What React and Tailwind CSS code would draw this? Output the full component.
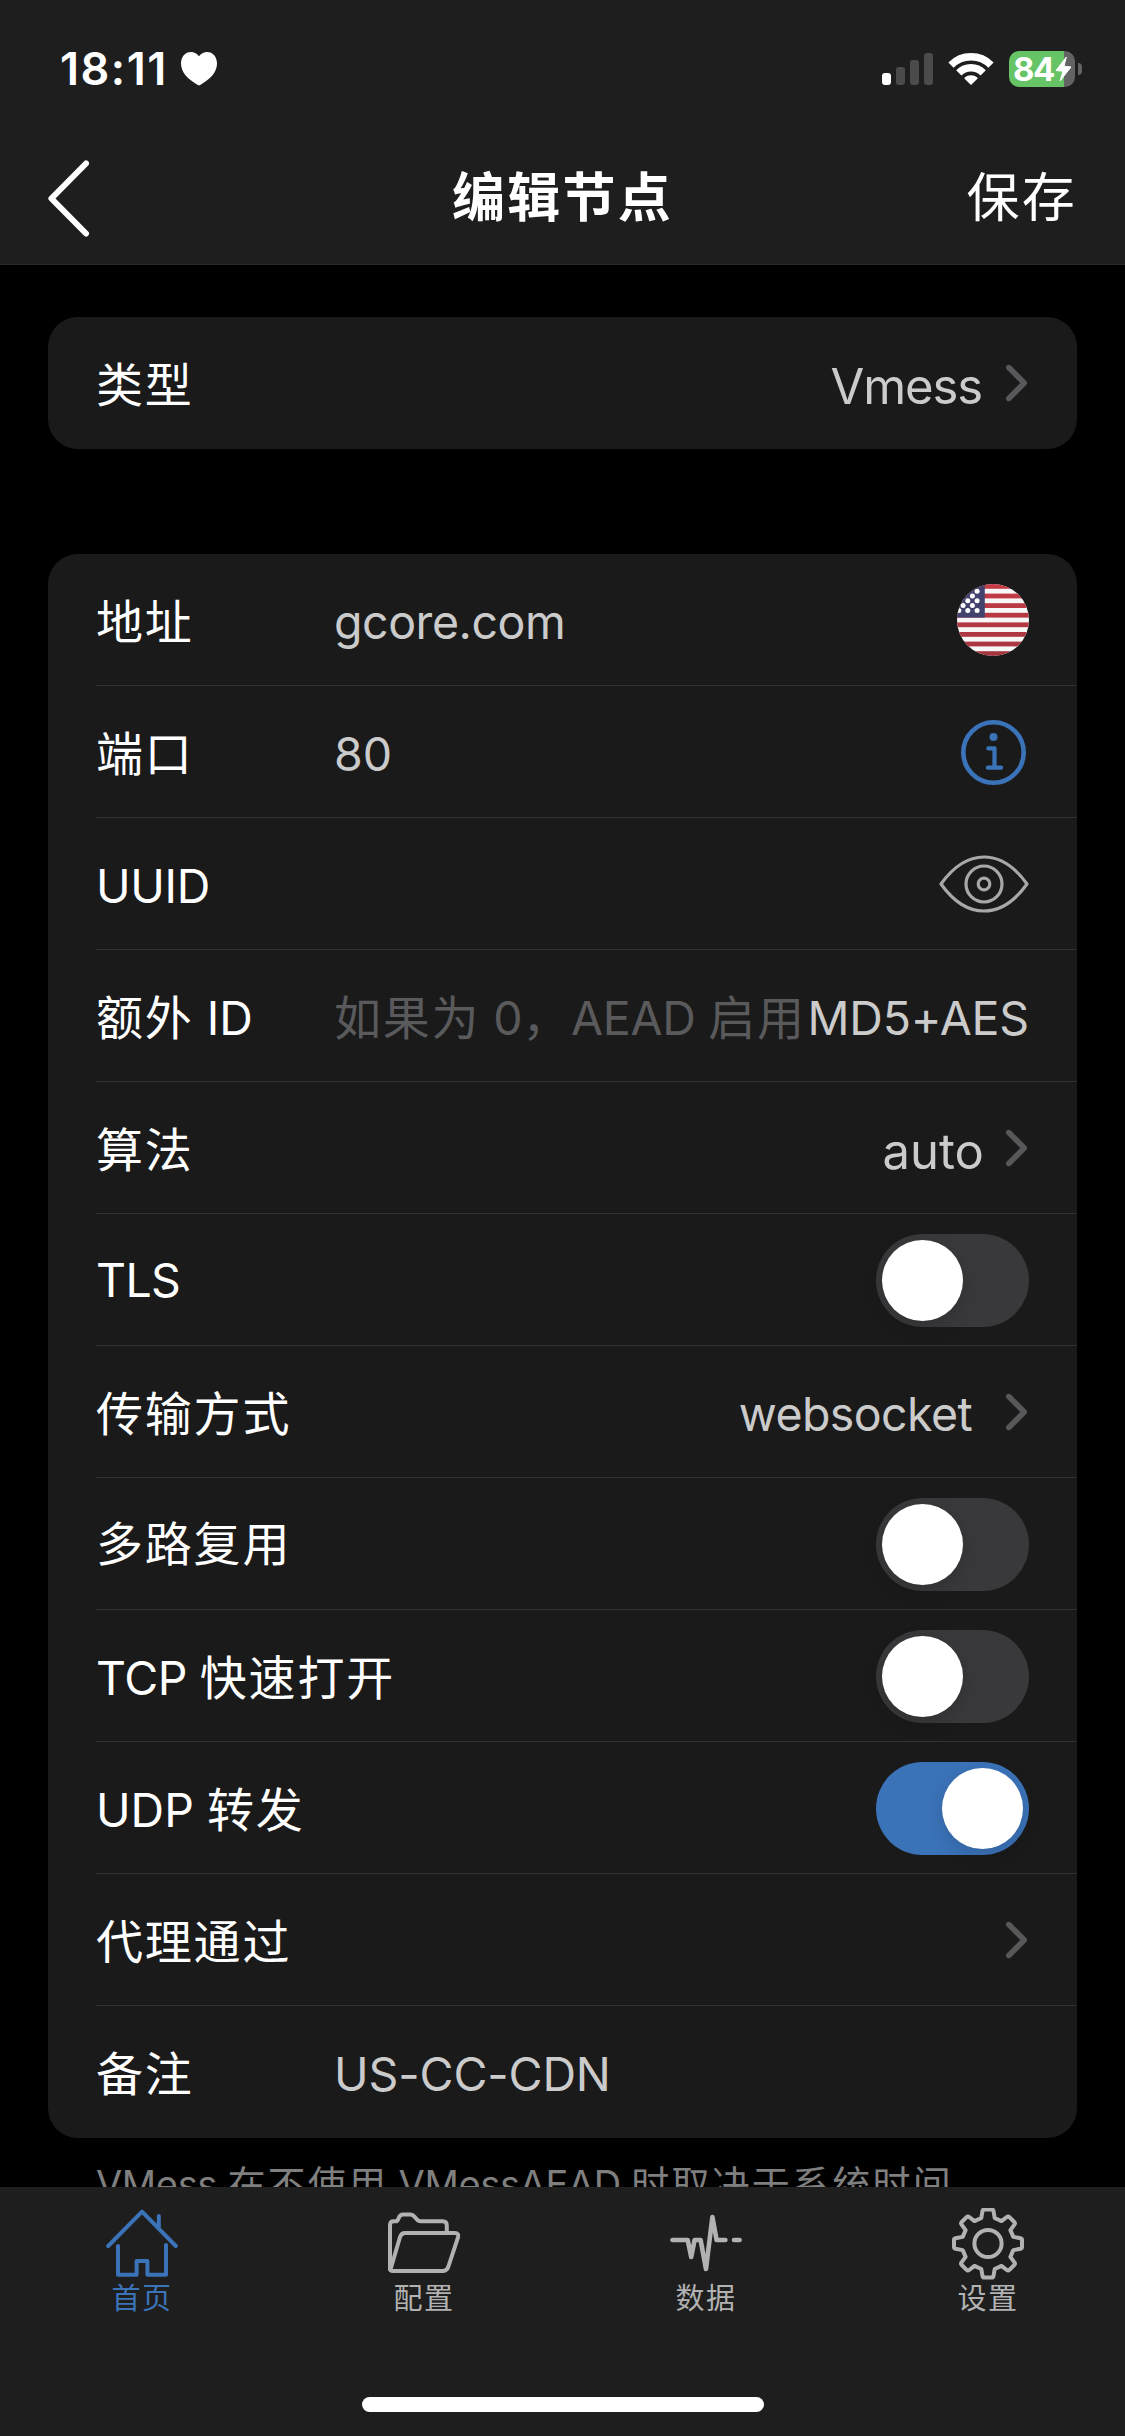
// Splits mixed text so Chinese runs get their own size and tracking.
function Mixed({ text, cjk, latin = "" }) {
  return text
    .split(/([\u3000-\u9fff\uff00-\uffef]+)/)
    .filter(Boolean)
    .map((run, i) => (
      <span key={i} className={/[\u3000-\u9fff\uff00-\uffef]/.test(run) ? cjk : latin}>
        {run}
      </span>
    ));
}

const ROW_CJK = "text-[47px] tracking-[1.8px]";

function StatusBar() {
  return (
    <div className="flex h-[137px] items-center pl-[60px] pr-[43px]">
      <span className="text-[45px] font-semibold leading-none tracking-[1.5px]">18:11</span>
      <svg className="ml-[13px] mt-px h-[34px] w-9" viewBox="0 0 36 34" fill="#fff">
        <path d="M18 4.2C20.3 1 23.4 0 26 0C32 0 36 4.8 36 11.6C36 20.5 29 27.3 19.6 32.8Q18 33.8 16.4 32.8C7 27.3 0 20.5 0 11.6C0 4.8 4 0 10 0C12.6 0 15.7 1 18 4.2Z" />
      </svg>
      <div className="ml-auto flex h-8 items-end gap-[5px]">
        <i className="h-3 w-[9px] rounded-[3px] bg-white" />
        <i className="h-[18px] w-[9px] rounded-[3px] bg-[#4b4b4b]" />
        <i className="h-[25px] w-[9px] rounded-[3px] bg-[#4b4b4b]" />
        <i className="h-8 w-[9px] rounded-[3px] bg-[#4b4b4b]" />
      </div>
      <svg className="ml-[15px] h-[35px] w-[46px]" viewBox="0 0 46 35" fill="none" stroke="#fff" strokeWidth="7.4">
        <path d="M3 14.1A28.2 28.2 0 0 1 43 14.1" />
        <path d="M10.8 21.8A17.2 17.2 0 0 1 35.2 21.8" />
        <path d="M23 33L17.2 27.2A8.6 8.6 0 0 1 28.8 27.2Z" fill="#fff" strokeWidth="1.6" strokeLinejoin="round" />
      </svg>
      <div className="relative ml-[15px] flex h-9 w-[66px] items-center rounded-[10px] bg-gradient-to-r from-[#66c466] from-[55px] to-[#636363] to-[55px]">
        <span className="pl-1 text-[33px] font-bold leading-9 tracking-[-1.5px]">84</span>
        <svg className="absolute inset-0" width="66" height="36" viewBox="0 0 66 36" fill="#fff" stroke="#fff" strokeLinejoin="round">
          <path d="M57.3 6L47 19.5L53.9 20.2L51.2 29.8L62 16L55 15.2Z" />
        </svg>
      </div>
      <i className="ml-[3px] h-3 w-1 rounded-r-full bg-[#636363]" />
    </div>
  );
}

function NavBar() {
  return (
    <div className="-mt-[5px] grid h-[132px] grid-cols-3 items-center px-12">
      <svg className="h-[77px] w-[42px]" viewBox="0 0 42 77" fill="none" stroke="#fff" strokeWidth="6" strokeLinecap="round" strokeLinejoin="round">
        <path d="M38 3.5L3.4 38.5L38 73.5" />
      </svg>
      <h1 className="whitespace-nowrap text-center text-[53px] font-semibold leading-none tracking-[2.2px]">编辑节点</h1>
      <span className="text-right text-[53px] leading-none tracking-[2.2px]">保存</span>
    </div>
  );
}

function Chevron() {
  return (
    <svg className="h-[38px] w-6 shrink-0" viewBox="0 0 24 38" fill="none" stroke="#58585a" strokeWidth="5.6" strokeLinecap="round" strokeLinejoin="round">
      <path d="M3.8 3.6L19.2 19L3.8 34.4" />
    </svg>
  );
}

const STRIPES = [0, 2, 4, 6, 8, 10, 12, 14];
const STARS = [
  [20.1, 7.3], [15.4, 11.9], [10.8, 16.7], [20.1, 16.7], [6.1, 21.5],
  [15.4, 21.5], [1.8, 26.4], [10.8, 26.4], [20.1, 26.4],
];

function Flag() {
  return (
    <svg className="h-[72px] w-[72px]" viewBox="0 0 72 72">
      <defs>
        <linearGradient id="red" x2="0" y2="72" gradientUnits="userSpaceOnUse">
          <stop stopColor="#c63b46" />
          <stop offset="1" stopColor="#a43640" />
        </linearGradient>
        <clipPath id="round"><circle cx="36" cy="36" r="36" /></clipPath>
      </defs>
      <g clipPath="url(#round)">
        <rect width="72" height="72" fill="#f8f7f8" />
        {STRIPES.map((n) => (
          <rect key={n} y={n * 4.8} width="72" height="4.8" fill="url(#red)" />
        ))}
        <rect width="27.8" height="33.6" fill="#43426f" />
        {STARS.map(([x, y]) => (
          <circle key={x + "-" + y} cx={x} cy={y} r="2.5" fill="#fff" />
        ))}
      </g>
    </svg>
  );
}

function Info() {
  return (
    <svg className="mr-0.5 h-[66px] w-[66px]" viewBox="0 0 66 66" fill="none" stroke="#3b73b9" strokeWidth="4.6">
      <circle cx="32.5" cy="33.5" r="30.2" />
      <circle cx="32.5" cy="18" r="4" fill="#3b73b9" stroke="none" />
      <path d="M27.3 29.3H33.5V48.7M26.9 48.7H40.1" strokeWidth="4.2" strokeLinecap="round" strokeLinejoin="round" />
    </svg>
  );
}

function Eye() {
  return (
    <svg className="mt-px h-[58px] w-[90px]" viewBox="0 0 90 58" fill="none" stroke="#a8a8a8" strokeWidth="3.2" strokeLinejoin="round">
      <path d="M2 29C12 15 27 2 45 2S78 15 88 29C78 43 63 56 45 56S12 43 2 29Z" />
      <circle cx="45" cy="29" r="18" />
      <circle cx="45" cy="29" r="5.8" />
    </svg>
  );
}

function Switch({ on }) {
  return (
    <div className={`mt-0.5 flex h-[93px] w-[153px] items-center rounded-full px-1.5 ${on ? "justify-end bg-[#3b73b9]" : "bg-[#39393b]"}`}>
      <div className="h-[81px] w-[81px] rounded-full bg-white shadow-[0_6px_18px_rgba(0,0,0,0.15)]" />
    </div>
  );
}

function Row({ label, tight, labelTrack, last, children }) {
  return (
    <div className={`ml-12 flex h-[132px] items-center whitespace-nowrap pr-12 ${last ? "" : "border-b border-[#323233]"}`}>
      <span className={`w-[238px] shrink-0 text-[46.5px] leading-[56px] ${tight ? "" : "pt-1"}`}>
        <Mixed text={label} cjk={ROW_CJK} latin={labelTrack} />
      </span>
      {children}
    </div>
  );
}

function Value({ children, color = "text-[#cbcbcb]", className = "" }) {
  return <span className={`pt-1 text-[46.5px] leading-[56px] ${color} ${className}`}>{children}</span>;
}

function Right({ children }) {
  return <div className="ml-auto flex items-center">{children}</div>;
}

const TAB_ICONS = {
  home: (
    <g transform="translate(0 1)">
      <path d="M2.2 37L36 2.6L69.8 37M52.8 7V19" />
      <path d="M12 37V65.7H30.6V52H41.4V65.7H60V36" />
    </g>
  ),
  folder: (
    <g transform="translate(0 2.5)">
      <path d="M2 59V14.5Q2 10.8 5.6 10.8H7.5Q9.6 10.8 10.7 7.5Q12 4 15 4H22Q25 4 27.2 7L29.6 9.7Q30.6 10.8 32.6 10.8H54.6Q58.8 10.8 58.8 15V22" />
      <path d="M2.5 59L12 26.5Q13.4 22.6 17 22.6H67Q71 22.6 70 26.8L60.4 56Q58.8 60.5 54.5 60.5H5Q2 60.5 2 57.5" />
    </g>
  ),
  pulse: <path d="M2.5 32H17.7L21.2 49L24.6 32H30.6L36 61L42.4 9L46.6 32H55.4M64 32H69.6" strokeWidth="4.6" />,
  gear: (
    <g transform="translate(0 -0.5)">
      <path d="M32.3 2H39.7Q41.2 2 41.5 3.5L42.7 10.5L49.5 13.6L54.8 9.5Q56.2 8.4 57.4 9.6L62.3 14.5Q63.5 15.8 62.4 17.1L58.4 22.6L61.3 29.4L68.5 30.7Q70 31 70 32.4V39.6Q70 41 68.5 41.3L61.3 42.6L58.4 49.4L62.4 54.9Q63.5 56.2 62.3 57.5L57.4 62.4Q56.2 63.6 54.8 62.5L49.5 58.4L42.7 61.5L41.5 68.5Q41.2 70 39.7 70H32.3Q30.8 70 30.5 68.5L29.3 61.5L22.5 58.4L17.2 62.5Q15.8 63.6 14.6 62.4L9.7 57.5Q8.5 56.2 9.6 54.9L13.6 49.4L10.7 42.6L3.5 41.3Q2 41 2 39.6V32.4Q2 31 3.5 30.7L10.7 29.4L13.6 22.6L9.6 17.1Q8.5 15.8 9.7 14.5L14.6 9.6Q15.8 8.4 17.2 9.5L22.5 13.6L29.3 10.5L30.5 3.5Q30.8 2 32.3 2Z" />
      <circle cx="36" cy="36" r="13.6" />
    </g>
  ),
};

function Tab({ icon, label, active }) {
  return (
    <div className={`flex flex-col items-center ${active ? "text-[#3b73b9]" : "text-[#b2b2b2]"}`}>
      <svg
        className="h-[72px] w-[72px]"
        viewBox="0 0 72 72"
        fill="none"
        stroke="currentColor"
        strokeWidth="4"
        strokeLinecap="round"
        strokeLinejoin="round"
      >
        {TAB_ICONS[icon]}
      </svg>
      <span className="mt-[3px] text-[29px] leading-8 tracking-[1.5px]">{label}</span>
    </div>
  );
}

export default function App() {
  return (
    <div className="flex h-[2436px] w-[1125px] flex-col overflow-hidden bg-black font-['Inter','Noto_Sans_CJK_SC',sans-serif] text-white">
      <header className="h-[265px] shrink-0 border-b border-[#2a2a2a] bg-[#1e1e1e]">
        <StatusBar />
        <NavBar />
      </header>

      <main className="min-h-0 flex-1 overflow-hidden px-12 pt-[52px]">
        <section className="rounded-[30px] bg-[#1a1a1a]">
          <Row label="类型" last>
            <Right>
              <span className="mr-[23px] pt-2 text-[49px] leading-[56px] tracking-[-1.1px] text-[#cbcbcb]">Vmess</span>
              <Chevron />
            </Right>
          </Row>
        </section>

        <section className="mt-[105px] rounded-[30px] bg-[#1a1a1a]">
          <Row label="地址">
            <Value className="tracking-[-0.45px]">gcore.com</Value>
            <Right><Flag /></Right>
          </Row>
          <Row label="端口">
            <Value>80</Value>
            <Right><Info /></Right>
          </Row>
          <Row label="UUID" labelTrack="tracking-[-0.3px]">
            <Right><Eye /></Right>
          </Row>
          <Row label="额外 ID">
            <Value color="text-[#5a5a5c]">
              <Mixed text="如果为 0，AEAD 启用" cjk={ROW_CJK} latin="tracking-[-0.3px]" />
            </Value>
            <Right><Value className="tracking-[-0.2px]">MD5+AES</Value></Right>
          </Row>
          <Row label="算法">
            <Right>
              <span className="mr-[21px] pt-2 text-[49px] leading-[56px] text-[#cbcbcb]">auto</span>
              <Chevron />
            </Right>
          </Row>
          <Row label="TLS" labelTrack="tracking-[-0.6px]" tight>
            <Right><Switch /></Right>
          </Row>
          <Row label="传输方式">
            <Right>
              <Value className="mr-[33px] tracking-[-0.6px]">websocket</Value>
              <Chevron />
            </Right>
          </Row>
          <Row label="多路复用" tight>
            <Right><Switch /></Right>
          </Row>
          <Row label="TCP 快速打开" labelTrack="tracking-[-0.4px]">
            <Right><Switch /></Right>
          </Row>
          <Row label="UDP 转发">
            <Right><Switch on /></Right>
          </Row>
          <Row label="代理通过">
            <Right><Chevron /></Right>
          </Row>
          <Row label="备注" last>
            <Value className="tracking-[-0.1px]">US-CC-CDN</Value>
          </Row>
        </section>

        <p className="mt-[23px] whitespace-nowrap pl-12 text-[38px] leading-[46px] text-[#7f7f7f]">
          <Mixed text="VMess 在不使用 VMessAEAD 时取决于系统时间" cjk="text-[38px] tracking-[2.2px]" latin="tracking-[-0.35px]" />
        </p>
      </main>

      <nav className="flex h-[249px] shrink-0 flex-col bg-[#1e1e1e] pt-[21px]">
        <div className="ml-px grid grid-cols-[repeat(4,282px)]">
          <Tab icon="home" label="首页" active />
          <Tab icon="folder" label="配置" />
          <Tab icon="pulse" label="数据" />
          <Tab icon="gear" label="设置" />
        </div>
        <div className="mx-auto mb-6 mt-auto h-[15px] w-[402px] rounded-full bg-white" />
      </nav>
    </div>
  );
}
